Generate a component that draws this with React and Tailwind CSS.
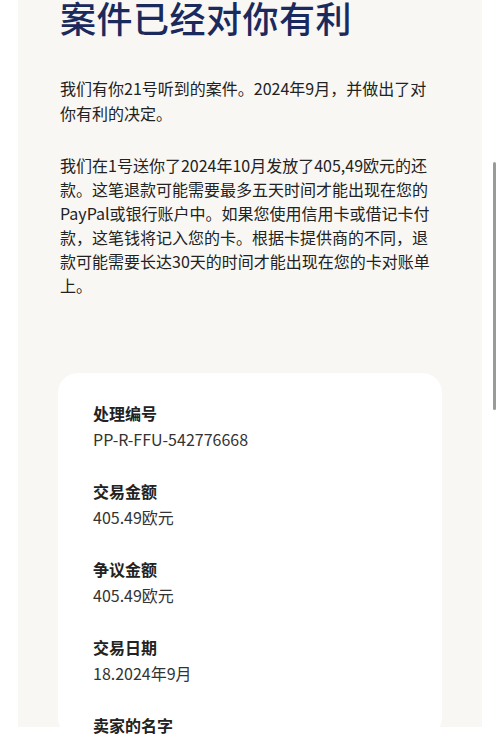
import React from "react";

const fields = [
  ["处理编号", "PP-R-FFU-542776668"],
  ["交易金额", "405.49欧元"],
  ["争议金额", "405.49欧元"],
  ["交易日期", "18.2024年9月"],
  ["卖家的名字", ""],
];

export default function App() {
  return (
    <div
      className="relative h-[736px] w-[500px] overflow-hidden bg-white"
      style={{ fontFamily: '"Noto Sans CJK SC", "Noto Sans", sans-serif' }}
    >
      <div className="ml-[18px] h-full w-[464px] bg-[#f8f7f4]">
        <div className="pl-[42px]">
          <h1 className="-mt-[9px] text-[36px] font-medium leading-[52px] tracking-[0.5px] text-[#1b2a5c]">
            案件已经对你有利
          </h1>
          <p className="mt-[33px] w-[378px] text-[16px] leading-[25px] text-[#222]">
            我们有你21号听到的案件。2024年9月，并做出了对你有利的决定。
          </p>
          <p className="mt-[27px] w-[378px] text-[16px] leading-[24px] text-[#222]">
            我们在1号送你了2024年10月发放了405,49欧元的还款。这笔退款可能需要最多五天时间才能出现在您的PayPal或银行账户中。如果您使用信用卡或借记卡付款，这笔钱将记入您的卡。根据卡提供商的不同，退款可能需要长达30天的时间才能出现在您的卡对账单上。
          </p>
        </div>
        <div className="mx-[40px] mt-[76px] rounded-[20px] bg-white px-[35px] pt-[27px]">
          <div className="flex flex-col gap-[26px]">
            {fields.map(([label, value]) => (
              <div key={label} className="flex flex-col">
                <div className="text-[16px] font-bold leading-[26px] text-[#222]">{label}</div>
                {value && (
                  <div className="text-[16px] leading-[26px] text-[#333]">{value}</div>
                )}
              </div>
            ))}
          </div>
        </div>
      </div>
      <div className="absolute left-[493px] top-[162px] h-[248px] w-[3px] rounded-full bg-[#9a9a9a]" />
    </div>
  );
}
